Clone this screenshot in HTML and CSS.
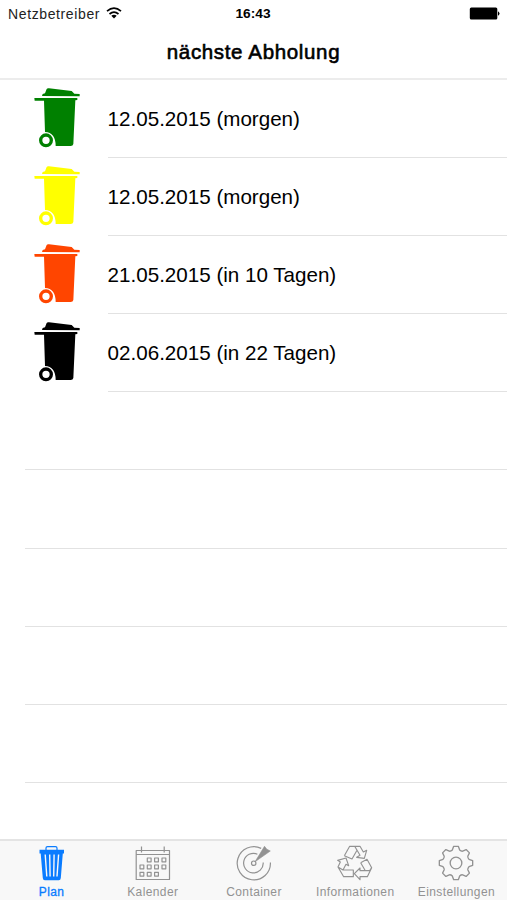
FILE: index.html
```html
<!DOCTYPE html>
<html lang="de">
<head>
    <meta charset="UTF-8">
    <meta name="viewport" content="width=device-width, initial-scale=1.0">
    <title>nächste Abholung</title>
    <link rel="stylesheet" href="styles.css">
</head>
<body>
    <!-- Bin shape shared by all rows -->
    <svg class="sprite" width="0" height="0">
        <symbol id="bin" viewBox="39 18 144 186">
            <path d="M66 48 L68 42 L75 40 L80 27 Q82 24 87 25 L155 33 L163 41 L179 42 V49 Z"/>
            <path d="M43 54 H172 V60 L166 61 L160 192 Q159 198 152 198 H107 Q107 158 75 156 L72 62 H44 Z"/>
            <circle cx="78" cy="181" r="16" fill="none" stroke="currentColor" stroke-width="10"/>
        </symbol>
    </svg>

    <div class="app">
        <header class="header">
            <div class="status-bar">
                <div class="carrier">
                    <span>Netzbetreiber</span>
                    <svg class="wifi" viewBox="0 0 16 12">
                        <path d="M1 4.2 Q8 -1.8 15 4.2 M3.5 7 Q8 3.2 12.5 7" fill="none" stroke="#000" stroke-width="1.7"/>
                        <path d="M5.3 8.8 Q8 6.7 10.7 8.8 L8 11.6 Z"/>
                    </svg>
                </div>
                <span class="time">16:43</span>
                <svg class="battery" viewBox="0 0 31 13">
                    <rect x="0.8" y="0.5" width="27.5" height="12" rx="1.5"/>
                    <path d="M29 4.2 Q32 6.5 29 8.8 Z"/>
                </svg>
            </div>
            <h1 class="title">nächste Abholung</h1>
        </header>

        <ul class="pickup-list">
            <li class="row">
                <svg class="bin green"><use href="#bin"/></svg>
                <span class="date">12.05.2015 (morgen)</span>
            </li>
            <li class="row">
                <svg class="bin yellow"><use href="#bin"/></svg>
                <span class="date">12.05.2015 (morgen)</span>
            </li>
            <li class="row">
                <svg class="bin orange"><use href="#bin"/></svg>
                <span class="date">21.05.2015 (in 10 Tagen)</span>
            </li>
            <li class="row">
                <svg class="bin black"><use href="#bin"/></svg>
                <span class="date">02.06.2015 (in 22 Tagen)</span>
            </li>
            <li class="row empty"></li>
            <li class="row empty"></li>
            <li class="row empty"></li>
            <li class="row empty"></li>
            <li class="row empty"></li>
        </ul>

        <nav class="tab-bar">
            <div class="tab active">
                <svg class="tab-icon" viewBox="0 0 36 36">
                    <path class="handle" d="M12 5 V3 Q12 1.6 13.5 1.6 H21.5 Q23 1.6 23 3 V5"/>
                    <path d="M5.5 4.8 H30 V8.5 H28.8 L26.8 33 Q26.6 35.2 24.8 35.2 H10.8 Q9 35.2 8.8 33 L6.7 8.5 H5.5 Z" fill="currentColor"/>
                    <path class="slots" d="M11.2 9.5 L12.8 31.5 M15.7 9.5 L16.1 31.5 M20.1 9.5 L19.7 31.5 M24.6 9.5 L23 31.5"/>
                </svg>
                <span>Plan</span>
            </div>
            <div class="tab">
                <svg class="tab-icon" viewBox="0 0 36 36">
                    <path d="M1.2 5.5 H34.5 V34.5 H1.2 Z M1.2 9.5 H34.5 M6.5 1.5 V7.5 M29.2 1.5 V7.5"/>
                    <path d="M12.3 13 h3.8 v3.8 h-3.8z M19.6 13 h3.8 v3.8 h-3.8z M27 13 h3.8 v3.8 h-3.8z M5 20 h3.8 v3.8 h-3.8z M12.3 20 h3.8 v3.8 h-3.8z M19.6 20 h3.8 v3.8 h-3.8z M27 20 h3.8 v3.8 h-3.8z M5 27.3 h3.8 v3.8 h-3.8z M12.3 27.3 h3.8 v3.8 h-3.8z M19.6 27.3 h3.8 v3.8 h-3.8z"/>
                </svg>
                <span>Kalender</span>
            </div>
            <div class="tab">
                <svg class="tab-icon" viewBox="0 0 36 36">
                    <path d="M25.2 3.4 A16.6 16.6 0 1 0 34.4 17.5 M21.4 9.2 A9.8 9.8 0 1 0 27.2 17.5"/>
                    <circle cx="17.7" cy="18.2" r="2.2"/>
                    <path d="M19 16.8 L28.5 1.3 L30.8 4.2 L34.3 6 Z" fill="currentColor" stroke-width="0.6"/>
                </svg>
                <span>Container</span>
            </div>
            <div class="tab">
                <svg class="tab-icon recycle" viewBox="0 0 108 108">
                    <path d="M22 32 L38 4 H69 L79 21 L89 16 L82 40 L59 37 L69 31 L54 5 M54 5 L60 16 L45 42 L22 32"/>
                    <path d="M71 53 L90 43 L104 68 L91 95 H69 V104 L52 86 L69 69 V77 H98 L103 69 M71 53 L85 77"/>
                    <path d="M2 46 L27 39 L35 62 L27 58 L18 75 H49 V95 H20 L3 66 L10 51 Z M3 66 L18 75"/>
                </svg>
                <span>Informationen</span>
            </div>
            <div class="tab">
                <svg class="tab-icon" viewBox="-54 -54 108 108">
                    <path class="gear" d="M-7 -50 H7 L11 -39 Q15 -35 20 -35.4 L30.4 -40.3 L40.3 -30.4 L35.4 -20 Q35 -15 39 -11 L50 -7 V7 L39 11 Q35 15 35.4 20 L40.3 30.4 L30.4 40.3 L20 35.4 Q15 35 11 39 L7 50 H-7 L-11 39 Q-15 35 -20 35.4 L-30.4 40.3 L-40.3 30.4 L-35.4 20 Q-35 15 -39 11 L-50 7 V-7 L-39 -11 Q-35 -15 -35.4 -20 L-40.3 -30.4 L-30.4 -40.3 L-20 -35.4 Q-15 -35 -11 -39 Z"/>
                    <circle class="gear" r="17.5"/>
                </svg>
                <span>Einstellungen</span>
            </div>
        </nav>
    </div>
</body>
</html>
```

FILE: styles.css
```css
* {
    margin: 0;
    padding: 0;
    box-sizing: border-box;
}

body {
    background-color: #fff;
    color: #000;
    font-family: 'Liberation Sans', Arial, sans-serif;
}

.sprite {
    position: absolute;
}

.app {
    height: 900px;
    display: flex;
    flex-direction: column;
    overflow: hidden;
}

/* Header */
.header {
    height: 80px;
    flex-shrink: 0;
    border-bottom: 2px solid #ececec;
}

.status-bar {
    display: grid;
    grid-template-columns: 1fr auto 1fr;
    align-items: center;
    height: 27px;
    padding: 0 7px 0 8px;
    font-size: 14px;
}

.carrier {
    display: flex;
    align-items: center;
    gap: 6px;
    letter-spacing: 0.62px;
    color: #222;
}

.wifi {
    width: 16px;
    height: 12px;
    margin-top: -2px;
}

.time {
    font-weight: bold;
    font-size: 13.7px;
    margin-right: 2px;
}

.battery {
    width: 31px;
    height: 13px;
    justify-self: end;
}

.title {
    font-size: 20.5px;
    font-weight: normal;
    line-height: 49px;
    text-align: center;
    letter-spacing: 0.65px;
    -webkit-text-stroke: 0.6px #000;
}

/* Pickup list */
.pickup-list {
    flex: 1;
    list-style: none;
}

.row {
    display: flex;
    align-items: center;
    height: 78.1px;
    padding-left: 33px;
}

.bin {
    width: 48px;
    height: 62px;
    margin-top: -5px;
    fill: currentColor;
}

.green {
    color: #008000;
}

.yellow {
    color: #ffff00;
}

.orange {
    color: #ff4500;
}

.black {
    color: #000;
}

.date {
    flex: 1;
    align-self: stretch;
    margin-left: 26.6px;
    border-bottom: 1px solid #e2e2e2;
    font-size: 20.6px;
    line-height: 77px;
}

.empty {
    margin-left: 25px;
    border-bottom: 1px solid #e2e2e2;
}

/* Tab bar */
.tab-bar {
    display: flex;
    height: 61px;
    flex-shrink: 0;
    padding-left: 1px;
    border-top: 2px solid #e4e4e4;
    background-color: #f8f8f8;
}

.tab {
    flex: 1;
    display: flex;
    flex-direction: column;
    align-items: center;
    padding-top: 4px;
    color: #929292;
    font-size: 12px;
    line-height: 14px;
    letter-spacing: 0.4px;
}

.tab-icon {
    width: 36px;
    height: 36px;
    margin-bottom: 4px;
    fill: none;
    stroke: currentColor;
    stroke-width: 1.2;
    stroke-linejoin: round;
}

.recycle {
    stroke-width: 3.4;
}

.gear {
    stroke-width: 4;
}

.active {
    color: #0a7cff;
}

.active .tab-icon {
    stroke: none;
}

.active .handle {
    stroke: currentColor;
    stroke-width: 1.2;
}

.active .slots {
    stroke: #f8f8f8;
    stroke-width: 1.4;
}

.active span {
    -webkit-text-stroke: 0.3px #0a7cff;
}
```
